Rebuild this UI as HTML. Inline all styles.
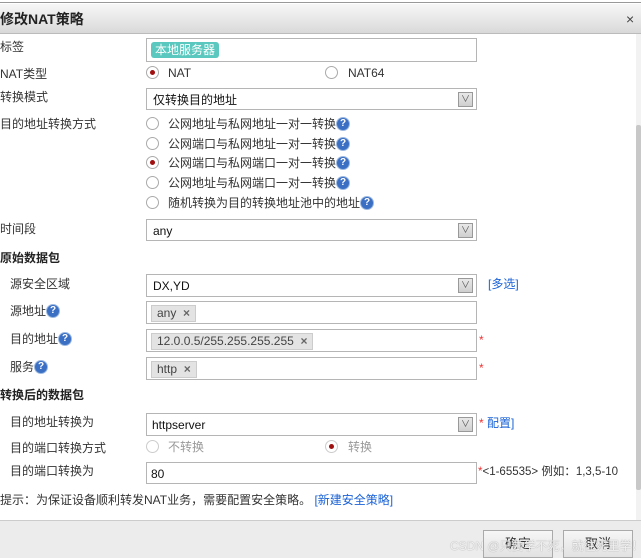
<!DOCTYPE html>
<html><head><meta charset="utf-8"><style>
*{margin:0;padding:0;box-sizing:border-box}
body{width:641px;height:558px;overflow:hidden;background:#fff;font-family:"Liberation Sans","Noto Sans CJK SC",sans-serif;font-size:12px;color:#333;position:relative}
.a{position:absolute;white-space:nowrap;line-height:16px}
.box{position:absolute;border:1px solid #b5b5b5;background:#fff;left:146px;width:331px}
.sel .arr{position:absolute;right:3px;top:3px;width:15px;height:15px;border:1px solid #999;background:linear-gradient(#e8e8e8,#cfcfcf);font-size:9px;color:#555;text-align:center;line-height:13px}
.rad{position:absolute;width:13px;height:13px;border:1px solid #aaa;border-radius:50%;background:#fff}
.rad.on::after{content:"";position:absolute;left:3px;top:3px;width:5px;height:5px;border-radius:50%;background:#a01010}
.q{display:inline-block;width:14px;height:14px;border-radius:50%;background:#3a6fc4;color:#fff;font-size:10px;font-weight:bold;text-align:center;line-height:12px;vertical-align:top;margin-top:1px;border:1px solid #9bb8e0;font-family:"Liberation Sans",sans-serif}
.tag{position:absolute;left:4px;top:3px;height:17px;background:#e3e3e3;border:1px solid #ccc;padding:0 5px;line-height:15px;color:#444}
.b{font-weight:bold;color:#222}
.blue{color:#1a62d6}
.red{color:#e33}
</style></head><body>
<div class="a" style="left:0;top:0;width:641px;height:3px;background:#fff;border-bottom:1px solid #999"></div>
<div class="a" style="left:0;top:4px;width:641px;height:30px;background:linear-gradient(#f7f7f7,#d9d9d9);border-bottom:1px solid #bbb"></div>
<div class="a b" style="left:0;top:11px;font-size:14px">修改NAT策略</div>
<div class="a" style="left:626px;top:11px;font-size:14px;color:#444">×</div>
<div class="a" style="left:636px;top:34px;width:5px;height:486px;background:#f2f2f2"></div>
<div class="a" style="left:636px;top:125px;width:5px;height:365px;background:#c8c8c8;border-radius:2px"></div>

<div class="a" style="left:0;top:39px">标签</div>
<div class="box" style="top:38px;height:24px"><span class="a" style="left:4px;top:3px;background:#5ac8be;color:#fff;padding:0 4px;border-radius:3px;line-height:16px">本地服务器</span></div>
<div class="a" style="left:0;top:66px">NAT类型</div>
<div class="rad on" style="left:146px;top:66px"></div><div class="a" style="left:168px;top:65px">NAT</div>
<div class="rad" style="left:325px;top:66px"></div><div class="a" style="left:348px;top:65px">NAT64</div>
<div class="a" style="left:0;top:89px">转换模式</div>
<div class="box sel" style="top:88px;height:22px"><span class="a" style="left:6px;top:3px;color:#111">仅转换目的地址</span><span class="arr">∨</span></div>
<div class="a" style="left:0;top:116px">目的地址转换方式</div>
<div class="rad" style="left:146px;top:117px"></div><div class="a" style="left:168px;top:116px">公网地址与私网地址一对一转换<span class="q">?</span></div>
<div class="rad" style="left:146px;top:137px"></div><div class="a" style="left:168px;top:136px">公网端口与私网地址一对一转换<span class="q">?</span></div>
<div class="rad on" style="left:146px;top:156px"></div><div class="a" style="left:168px;top:155px">公网端口与私网端口一对一转换<span class="q">?</span></div>
<div class="rad" style="left:146px;top:176px"></div><div class="a" style="left:168px;top:175px">公网地址与私网端口一对一转换<span class="q">?</span></div>
<div class="rad" style="left:146px;top:196px"></div><div class="a" style="left:168px;top:195px">随机转换为目的转换地址池中的地址<span class="q">?</span></div>
<div class="a" style="left:0;top:221px">时间段</div>
<div class="box sel" style="top:219px;height:22px"><span class="a" style="left:6px;top:3px;color:#111">any</span><span class="arr">∨</span></div>

<div class="a b" style="left:0;top:250px">原始数据包</div>
<div class="a" style="left:10px;top:276px">源安全区域</div>
<div class="box sel" style="top:274px;height:23px"><span class="a" style="left:6px;top:3px;color:#111">DX,YD</span><span class="arr">∨</span></div>
<div class="a blue" style="left:488px;top:276px">[多选]</div>
<div class="a" style="left:10px;top:303px">源地址<span class="q">?</span></div>
<div class="box" style="top:301px;height:23px"><span class="tag">any&nbsp; <b style="color:#666">×</b></span></div>
<div class="a" style="left:10px;top:331px">目的地址<span class="q">?</span></div>
<div class="box" style="top:329px;height:23px"><span class="tag">12.0.0.5/255.255.255.255&nbsp; <b style="color:#666">×</b></span></div>
<div class="a red" style="left:479px;top:332px">*</div>
<div class="a" style="left:10px;top:359px">服务<span class="q">?</span></div>
<div class="box" style="top:357px;height:23px"><span class="tag">http&nbsp; <b style="color:#666">×</b></span></div>
<div class="a red" style="left:479px;top:360px">*</div>

<div class="a b" style="left:0;top:387px">转换后的数据包</div>
<div class="a" style="left:10px;top:414px">目的地址转换为</div>
<div class="box sel" style="top:413px;height:23px"><span class="a" style="left:5px;top:3px;color:#111">httpserver</span><span class="arr">∨</span></div>
<div class="a" style="left:479px;top:415px"><span class="red">*</span> <span class="blue">配置]</span></div>
<div class="a" style="left:10px;top:440px">目的端口转换方式</div>
<div class="rad" style="left:146px;top:440px;border-color:#ccc"></div><div class="a" style="left:168px;top:439px;color:#999">不转换</div>
<div class="rad on" style="left:325px;top:440px;border-color:#ccc"></div><div class="a" style="left:348px;top:439px;color:#999">转换</div>
<div class="a" style="left:10px;top:463px">目的端口转换为</div>
<div class="box" style="top:462px;height:22px"><span class="a" style="left:4px;top:3px;color:#111">80</span></div>
<div class="a" style="left:478px;top:464px;font-size:11.5px"><span class="red">*</span>&lt;1-65535&gt; 例如：1,3,5-10</div>
<div class="a" style="left:0;top:492px">提示：为保证设备顺利转发NAT业务，需要配置安全策略。 <span class="blue">[新建安全策略]</span></div>

<div class="a" style="left:0;top:520px;width:641px;height:38px;background:#ececec;border-top:1px solid #ccc"></div>
<div class="a" style="left:483px;top:530px;width:70px;height:28px;border:1px solid #aaa;background:linear-gradient(#f6f6f6,#e2e2e2);text-align:center;line-height:26px;font-size:13px">确定</div>
<div class="a" style="left:563px;top:530px;width:70px;height:28px;border:1px solid #aaa;background:linear-gradient(#f6f6f6,#e2e2e2);text-align:center;line-height:26px;font-size:13px">取消</div>
<div class="a" style="left:450px;top:538px;color:rgba(255,255,255,.85);font-size:12px;text-shadow:0 0 1px #888">CSDN @只要学不死，就往死里学！</div>
</body></html>
